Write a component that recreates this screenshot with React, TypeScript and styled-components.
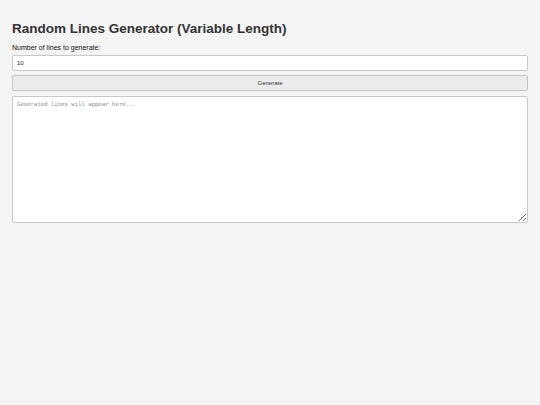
import React, { useState } from "react";
import styled, { createGlobalStyle } from "styled-components";

const Global = createGlobalStyle`
  html, body {
    margin: 0;
    padding: 0;
    background: #f4f4f4;
  }
  body {
    font-family: "Liberation Sans", Arial, sans-serif;
  }
`;

const Page = styled.div`
  padding: 21px 12px 12px 12px;
  display: flex;
  flex-direction: column;
`;

const Title = styled.h1`
  margin: 0 0 8px 0;
  font-size: 13.5px;
  font-weight: bold;
  color: #333;
  line-height: normal;
`;

const Label = styled.label`
  display: block;
  font-size: 7px;
  color: #111;
  line-height: 8px;
  margin-bottom: 3px;
`;

const NumberInput = styled.input`
  box-sizing: border-box;
  width: 100%;
  height: 16px;
  margin: 0 0 4px 0;
  padding: 0 4px;
  border: 1px solid #c8c8c8;
  border-radius: 2px;
  background: #fff;
  font-family: "Liberation Sans", Arial, sans-serif;
  font-size: 6px;
  color: #222;
  outline: none;
  appearance: textfield;
  &::-webkit-inner-spin-button,
  &::-webkit-outer-spin-button {
    -webkit-appearance: none;
    margin: 0;
  }
`;

const GenerateButton = styled.button`
  box-sizing: border-box;
  width: 100%;
  height: 16px;
  margin: 0 0 5px 0;
  padding: 0;
  border: 1px solid #c4c4c4;
  border-radius: 2px;
  background: #ececec;
  font-family: "Liberation Sans", Arial, sans-serif;
  font-size: 6px;
  color: #333;
  cursor: pointer;
`;

const Output = styled.textarea`
  box-sizing: border-box;
  width: 100%;
  height: 127px;
  margin: 0;
  padding: 4px;
  border: 1px solid #c8c8c8;
  border-radius: 2px;
  background: #fff;
  font-family: "DejaVu Sans Mono", "Liberation Mono", monospace;
  font-size: 5.65px;
  line-height: 1.3;
  color: #333;
  outline: none;
  resize: vertical;
  &::placeholder {
    color: #8a8a8a;
  }
`;

export default function App() {
  const [count, setCount] = useState("10");
  const [text, setText] = useState("");
  return (
    <>
      <Global />
      <Page>
        <Title>Random Lines Generator (Variable Length)</Title>
        <Label htmlFor="count">Number of lines to generate:</Label>
        <NumberInput
          id="count"
          type="number"
          value={count}
          onChange={(e) => setCount(e.target.value)}
        />
        <GenerateButton type="button">Generate</GenerateButton>
        <Output
          placeholder="Generated lines will appear here..."
          value={text}
          onChange={(e) => setText(e.target.value)}
        />
      </Page>
    </>
  );
}
